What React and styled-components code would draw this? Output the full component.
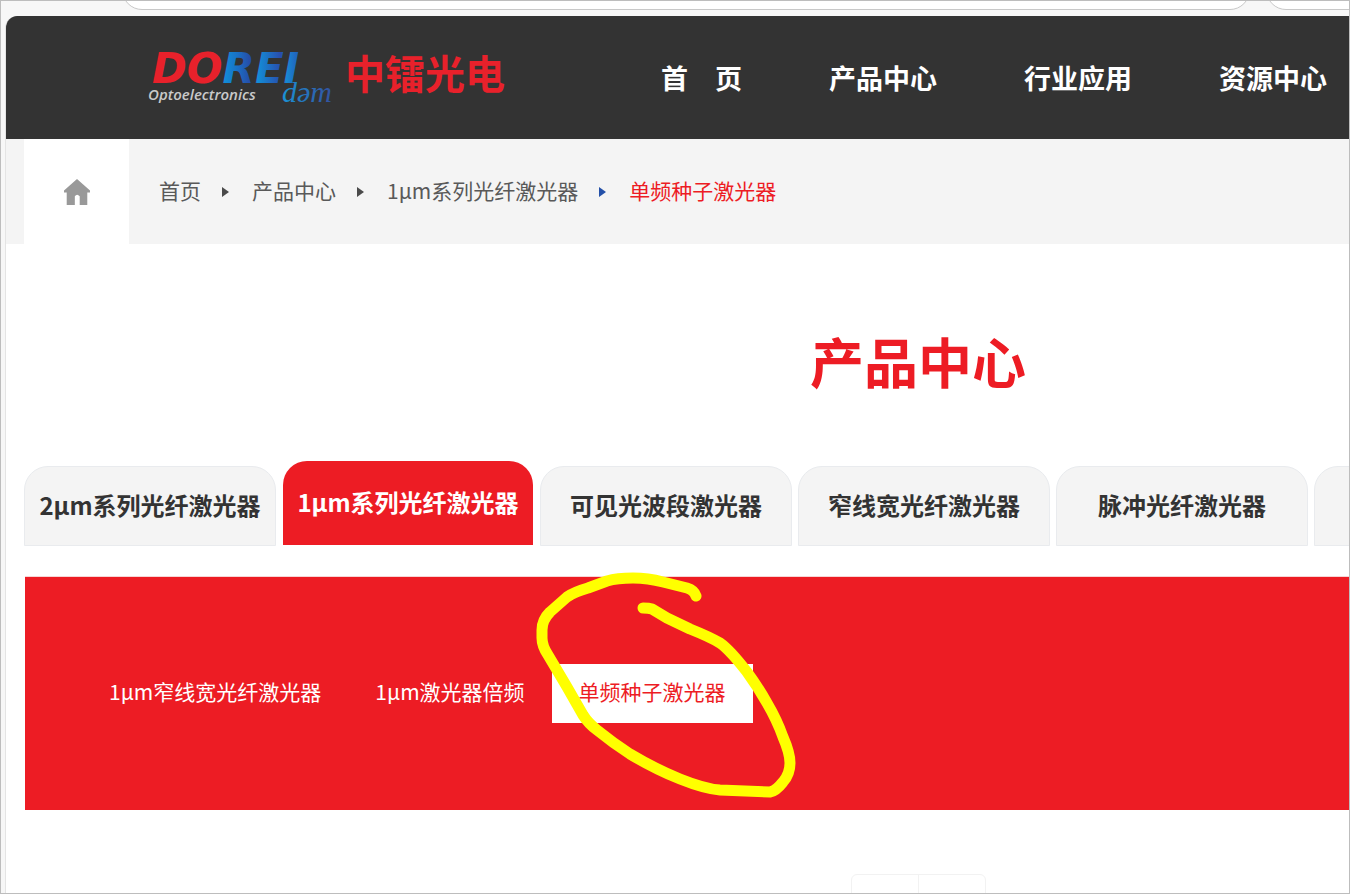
import React from 'react';
import styled, { createGlobalStyle } from 'styled-components';

/**
 * Styled Components
 */
const GlobalStyle = createGlobalStyle`
  * {
    box-sizing: border-box;
  }
  body {
    margin: 0;
    font-family: 'Noto Sans CJK SC', sans-serif;
    background: #fff;
  }
  a {
    color: inherit;
    text-decoration: none;
  }
`;

const Frame = styled.div`
  display: flex;
  flex-direction: column;
  height: 100vh;
  overflow: hidden;
  border: 1px solid #bdbdbd;
  background: #f7f7f7;
`;

const Toolbar = styled.div`
  display: flex;
  align-items: flex-end;
  gap: 16px;
  height: 15px;
  flex: none;
  padding: 0 0 6px 121px;
  overflow: hidden;
`;

const ToolbarField = styled.div`
  width: ${props => props.$width};
  height: 40px;
  flex: none;
  border: 1px solid #c8c8c8;
  border-radius: 20px;
  background: #fff;
`;

const Page = styled.div`
  display: flex;
  flex-direction: column;
  flex: 1;
  min-height: 0;
  margin-left: 4px;
  border-left: 1px solid #e4e4e4;
  border-top-left-radius: 12px;
  overflow: hidden;
  background: #fff;
`;

const Header = styled.header`
  display: flex;
  align-items: center;
  height: 123px;
  flex: none;
  padding-left: 140px;
  background: #333;
`;

const LogoLink = styled.a`
  display: block;
  flex: none;
  width: 370px;
  height: 60px;
  svg {
    display: block;
    overflow: visible;
  }
`;

const Nav = styled.nav`
  display: flex;
  gap: 87px;
  margin-left: 145px;
  color: #fff;
  font-size: 27px;
  line-height: 40px;
  font-weight: 700;
  white-space: pre;
`;

const BreadcrumbBar = styled.div`
  display: flex;
  align-items: center;
  height: 105px;
  flex: none;
  padding-left: 18px;
  background: #f4f4f4;
  color: #595959;
  font-size: 21px;
  line-height: 32px;
  white-space: nowrap;
`;

const HomeLink = styled.a`
  display: flex;
  align-items: center;
  justify-content: center;
  width: 105px;
  height: 105px;
  margin-right: 30px;
  background: #fff;
`;

const Crumb = styled.a`
  padding-bottom: 4px;
  color: ${props => (props.$current ? '#ed1c24' : 'inherit')};
`;

const Arrow = styled.span`
  width: 7px;
  margin: 0 23px 0 21px;
  border: 5px solid transparent;
  border-left: 7px solid ${props => (props.$current ? '#2450a8' : '#4a4a4a')};
  border-right: 0;
`;

const Main = styled.main`
  flex: 1;
  min-height: 0;
  min-width: 1806px;
  padding: 0 0 0 18px;
`;

const Title = styled.h1`
  margin: 0;
  padding: 77px 0 60px;
  color: #ed1c24;
  font-size: 54px;
  line-height: 80px;
  font-weight: 700;
  text-align: center;
`;

const Tabs = styled.div`
  display: flex;
  align-items: flex-end;
  gap: 6px;
  height: 85px;
`;

const Tab = styled.a`
  flex: none;
  width: ${props => (props.$active ? '250px' : '252px')};
  height: ${props => (props.$active ? '84px' : '80px')};
  margin: ${props => (props.$active ? '0 1px 1px' : '0')};
  border: ${props => (props.$active ? '0' : '1px solid #e9ebee')};
  border-radius: 24px 24px 0 0;
  background: ${props => (props.$active ? '#ed1c24' : '#f4f4f4')};
  color: ${props => (props.$active ? '#fff' : '#333')};
  font-size: 24px;
  line-height: ${props => (props.$active ? '82px' : '76px')};
  font-weight: 700;
  text-align: center;
  white-space: nowrap;
`;

const SubMenu = styled.div`
  position: relative;
  display: flex;
  margin: 30px 0 0 1px;
  padding: 87px 57px;
  border-top: 1px solid #f7d5d5;
  background: #ed1c24;
`;

const SubMenuItem = styled.a`
  padding: 0 27px 4px;
  background: ${props => (props.$active ? '#fff' : 'transparent')};
  color: ${props => (props.$active ? '#ed1c24' : '#fff')};
  font-size: 21px;
  line-height: 55px;
  white-space: nowrap;
`;

const Marker = styled.svg`
  position: absolute;
  top: -17px;
  left: 495px;
  pointer-events: none;
`;

const Pager = styled.div`
  display: flex;
  width: 135px;
  height: 60px;
  margin: 64px auto 0;
  border: 1px solid #f2f2f2;
  border-radius: 6px;
`;

const PagerCell = styled.span`
  flex: 1;
  & + & {
    border-left: 1px solid #f2f2f2;
  }
`;

/**
 * Data
 */
const navItems = ['首\u3000页', '产品中心', '行业应用', '资源中心'];

const crumbs = ['首页', '产品中心', '1μm系列光纤激光器', '单频种子激光器'];

const tabs = [
  '2μm系列光纤激光器',
  '1μm系列光纤激光器',
  '可见光波段激光器',
  '窄线宽光纤激光器',
  '脉冲光纤激光器',
  '光纤放大器',
];

const subItems = ['1μm窄线宽光纤激光器', '1μm激光器倍频', '单频种子激光器'];

/**
 * Components
 */
const Logo = () => (
  <svg width="370" height="60" viewBox="0 0 370 60">
    <defs>
      <linearGradient id="rei" gradientUnits="userSpaceOnUse" x1="76" x2="156" y1="0" y2="0">
        <stop offset="0" stopColor="#0f93dc" />
        <stop offset="0.2" stopColor="#1a6fc4" />
        <stop offset="0.4" stopColor="#2b409c" />
        <stop offset="0.44" stopColor="#1290d8" />
        <stop offset="0.74" stopColor="#2a4bac" />
        <stop offset="0.8" stopColor="#168bd4" />
        <stop offset="1" stopColor="#2850b0" />
      </linearGradient>
      <linearGradient id="dam" gradientUnits="userSpaceOnUse" x1="136" x2="186" y1="0" y2="0">
        <stop offset="0" stopColor="#1a93d6" />
        <stop offset="1" stopColor="#33519f" />
      </linearGradient>
    </defs>
    <text
      x="6"
      y="35"
      fill="#e8212b"
      fontFamily="'DejaVu Sans', sans-serif"
      fontSize="42"
      fontWeight="700"
      fontStyle="italic"
    >
      DO<tspan fill="url(#rei)">REI</tspan>
    </text>
    <text
      x="2"
      y="52"
      fill="#c9c9c9"
      fontFamily="'Open Sans', sans-serif"
      fontSize="15"
      fontWeight="600"
      fontStyle="italic"
    >
      Optoelectronics
    </text>
    <text
      x="136"
      y="54"
      fill="url(#dam)"
      fontFamily="'Liberation Serif', serif"
      fontSize="30"
      fontStyle="italic"
    >
      dəm
    </text>
    <text
      x="199"
      y="41"
      fill="#e8212b"
      fontFamily="'Noto Sans CJK SC', sans-serif"
      fontSize="40"
      fontWeight="700"
      style={{ fontStyle: 'oblique 8deg' }}
    >
      中镭光电
    </text>
  </svg>
);

const HomeIcon = () => (
  <svg width="26" height="26" viewBox="0 0 24 24" fill="#999">
    <path d="M12 0 24 10.500V12.500H21.500V24H14.500V16Q12 13 10 16V24H2.500V12.500H0V10.500Z" />
  </svg>
);

const App = () => (
  <>
    <GlobalStyle />
    <Frame>
      <Toolbar>
        <ToolbarField $width="1128px" />
        <ToolbarField $width="300px" />
      </Toolbar>
      <Page>
        <Header>
          <LogoLink href="#home" aria-label="DOREI">
            <Logo />
          </LogoLink>
          <Nav>
            {navItems.map(item => (
              <a key={item} href="#nav">
                {item}
              </a>
            ))}
          </Nav>
        </Header>
        <BreadcrumbBar>
          <HomeLink href="#home" aria-label="首页">
            <HomeIcon />
          </HomeLink>
          {crumbs.map((crumb, i) => (
            <React.Fragment key={crumb}>
              {i > 0 && <Arrow $current={i === crumbs.length - 1} />}
              <Crumb href="#crumb" $current={i === crumbs.length - 1}>
                {crumb}
              </Crumb>
            </React.Fragment>
          ))}
        </BreadcrumbBar>
        <Main>
          <Title>产品中心</Title>
          <Tabs>
            {tabs.map((tab, i) => (
              <Tab key={tab} href="#tab" $active={i === 1}>
                {tab}
              </Tab>
            ))}
          </Tabs>
          <SubMenu>
            {subItems.map((item, i) => (
              <SubMenuItem key={item} href="#series" $active={i === 2}>
                {item}
              </SubMenuItem>
            ))}
            <Marker
              width="300"
              height="250"
              viewBox="520 560 300 250"
              fill="none"
              stroke="#ff0"
              strokeWidth="11"
              strokeLinecap="round"
              strokeLinejoin="round"
            >
              <path d="M696 596Q694 590 687 588L663 582Q648 578 633 578Q617 578 607 581L588 588Q574 592 567 597L550 612Q542 620 542 630V638Q542 646 548 655L567 687L583 715Q588 723 597 730Q613 743 630 754Q655 769 680 779Q705 789 720 790L770 792Q776 791 783 782Q790 774 790 763Q790 753 783 737Q777 720 767 703Q758 687 747 672Q730 650 720 643Q710 637 690 629L667 618L652 609Q649 608 643 608" />
            </Marker>
          </SubMenu>
          <Pager>
            <PagerCell />
            <PagerCell />
          </Pager>
        </Main>
      </Page>
    </Frame>
  </>
);

export default App;
